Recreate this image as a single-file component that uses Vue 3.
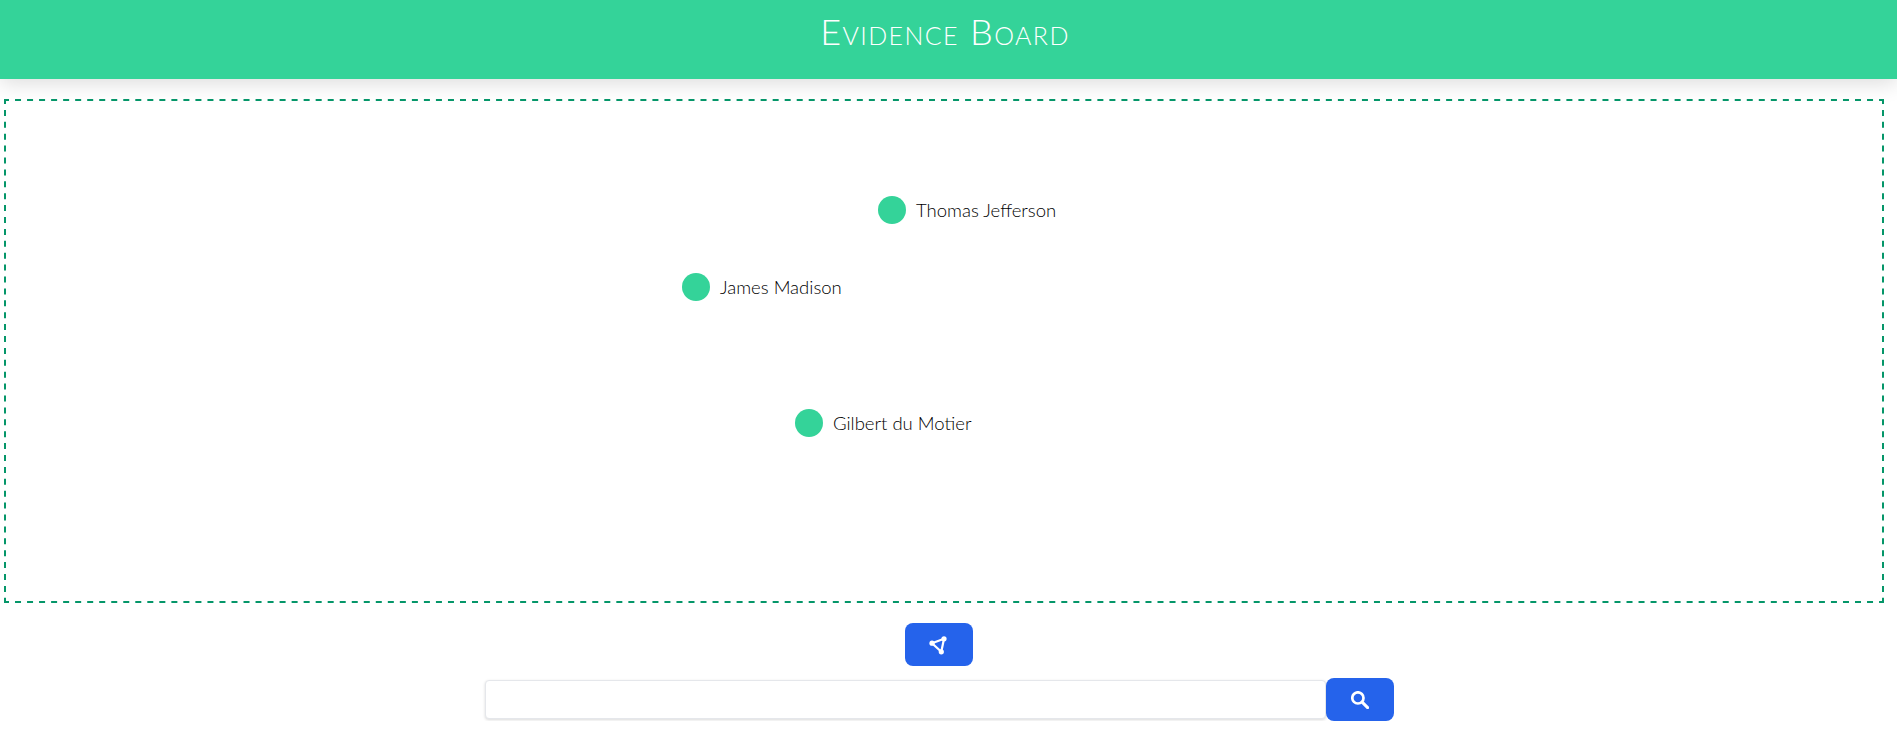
<template>
  <div class="page">
    <header class="header">
      <h1 class="title">Evidence Board</h1>
    </header>

    <main class="board">
      <svg class="outline" width="1880" height="504">
        <line x1="0" y1="1" x2="1880" y2="1" stroke-dasharray="6 6.026" stroke-dashoffset="1" />
        <line x1="0" y1="503" x2="1880" y2="503" stroke-dasharray="6 6.026" stroke-dashoffset="1" />
        <line x1="1" y1="0" x2="1" y2="504" stroke-dasharray="6 5.9" stroke-dashoffset="1" />
        <line x1="1879" y1="0" x2="1879" y2="504" stroke-dasharray="6 5.9" stroke-dashoffset="1" />
      </svg>
      <div
        v-for="node in nodes"
        :key="node.name"
        class="node"
        :style="{ left: node.x + 'px', top: node.y + 'px' }"
      >
        <span class="dot" />
        <span class="name">{{ node.name }}</span>
      </div>
    </main>

    <div class="controls">
      <button class="btn" type="button" aria-label="Connect">
        <svg width="20" height="20" viewBox="0 0 20 20" fill="#fff" stroke="#fff" stroke-width="2.2">
          <path d="M3 8.2 15 3.8 12.3 16.8Z" fill="none" stroke-linejoin="round" />
          <circle cx="3" cy="8.2" r="2.6" stroke="none" />
          <circle cx="15" cy="3.8" r="2.6" stroke="none" />
          <circle cx="12.3" cy="16.8" r="2.6" stroke="none" />
        </svg>
      </button>

      <form class="search" @submit.prevent>
        <input class="search-input" type="text" />
        <button class="btn" type="submit" aria-label="Search">
          <svg width="18" height="18" viewBox="0 0 18 18" fill="none" stroke="#fff">
            <circle cx="6.9" cy="6.9" r="5.6" stroke-width="2.7" />
            <path d="M11.4 11.4 16.6 16.6" stroke-width="3" stroke-linecap="round" />
          </svg>
        </button>
      </form>
    </div>
  </div>
</template>

<script setup>
const nodes = [
  { name: 'Thomas Jefferson', x: 874, y: 97 },
  { name: 'James Madison', x: 678, y: 174 },
  { name: 'Gilbert du Motier', x: 791, y: 310 },
];
</script>

<style>
body {
  background: #fff;
}
</style>

<style scoped>
.page {
  font-family: "Lato", "Open Sans", sans-serif;
  color: #000;
}

.header {
  position: relative;
  height: 79px;
  display: flex;
  align-items: center;
  justify-content: center;
  background-color: #34d399;
  box-shadow: 0 4px 20px rgba(0, 0, 0, 0.14);
}

.title {
  margin: 0 7px 17px 0;
  color: #fff;
  font-size: 36px;
  font-weight: 300;
  font-variant: small-caps;
  letter-spacing: 1.4px;
  line-height: 1;
}

.board {
  position: relative;
  height: 504px;
  margin: 20px 13px 0 4px;
}

.outline {
  position: absolute;
  left: 0;
  top: 0;
  stroke: #059669;
  stroke-width: 2;
}

.node {
  position: absolute;
  display: flex;
  align-items: center;
  gap: 10px;
}

.dot {
  width: 28px;
  height: 28px;
  border-radius: 50%;
  background-color: #34d399;
}

.name {
  font-size: 18.5px;
  font-weight: 300;
  line-height: 24px;
}

.controls {
  display: flex;
  flex-direction: column;
  align-items: center;
  gap: 12px;
  margin-top: 20px;
  padding-right: 19px;
}

.btn {
  width: 68px;
  height: 43px;
  padding: 0;
  display: flex;
  align-items: center;
  justify-content: center;
  border: 0;
  border-radius: 8px;
  background-color: #2563eb;
}

.search {
  display: flex;
  align-items: center;
}

.search-input {
  box-sizing: border-box;
  width: 841px;
  height: 39px;
  border: 1px solid #e5e7eb;
  border-radius: 4px;
  box-shadow: 0 1px 3px rgba(0, 0, 0, 0.15);
  background: #fff;
}
</style>
